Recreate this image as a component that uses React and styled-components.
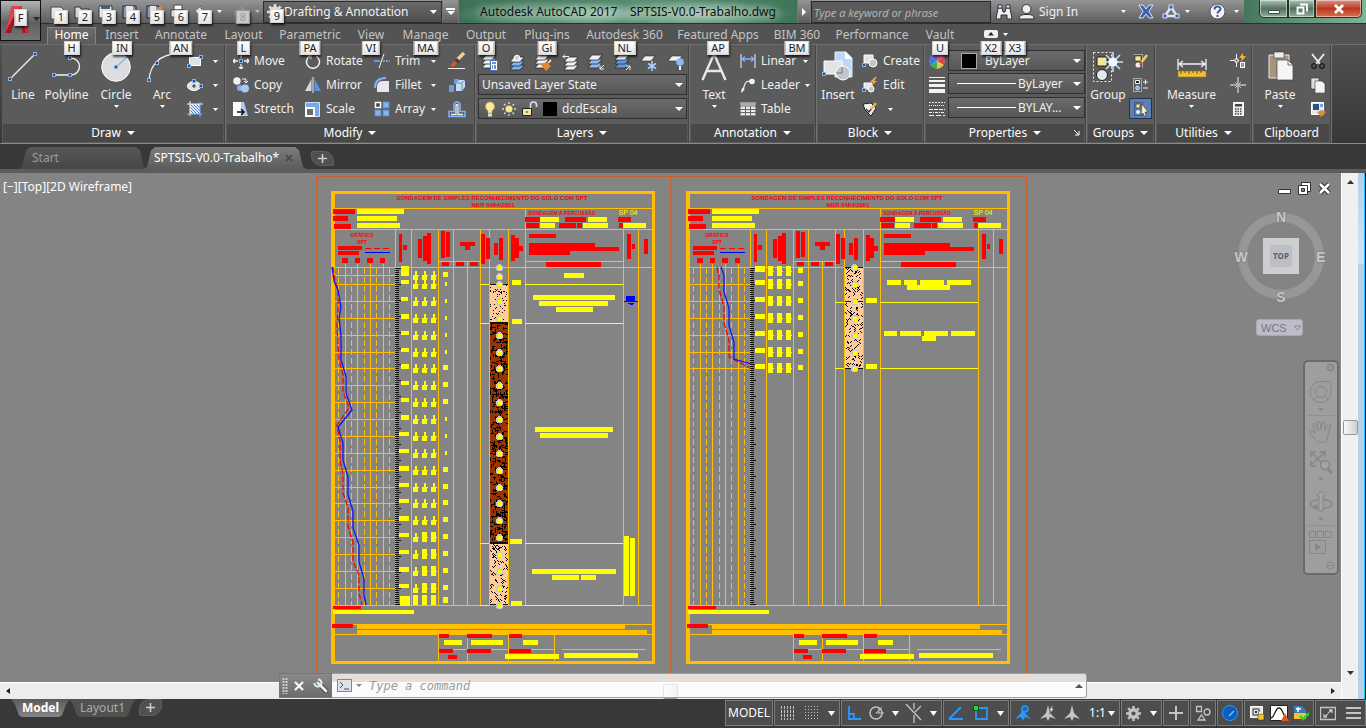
import React from "react";
import styled, { createGlobalStyle, css } from "styled-components";

const GlobalStyle = createGlobalStyle`
  * { box-sizing: border-box; }
  body {
    margin: 0;
    background: #383838;
    font-family: "Noto Sans", "Open Sans", sans-serif;
    font-size: 12px;
    line-height: 16px;
    color: #f0f0f0;
    overflow: hidden;
  }
  button, input, select { font: inherit; color: inherit; }
  button { background: none; border: 0; padding: 0; margin: 0; }
  svg { display: block; flex: none; }
  h1 { margin: 0; font: inherit; }
`;

/* ---------- small shared bits ---------- */

const Svg = ({ w = 16, h = 16, children, ...rest }) => (
  <svg width={w} height={h} viewBox={`0 0 ${w} ${h}`} fill="none" aria-hidden="true" {...rest}>
    {children}
  </svg>
);

const Caret = ({ w = 5, h = 3, color = "#fff" }) => (
  <Svg w={w} h={h}>
    <path d={`M0 0h${w}L${w / 2} ${h}z`} fill={color} />
  </Svg>
);

const KeyTip = styled.kbd`
  position: absolute;
  left: 50%;
  top: ${(p) => p.$top || 17}px;
  transform: translateX(-50%);
  z-index: 5;
  height: ${(p) => p.$h || 14}px;
  min-width: 13px;
  padding: 0 3px;
  text-align: center;
  font-family: inherit;
  font-size: 11px;
  line-height: ${(p) => (p.$h || 14) - 2}px;
  color: ${(p) => (p.$dim ? "#999" : "#222")};
  background: ${(p) => (p.$dim ? "#c8c8c8" : "linear-gradient(#fff, #e4e4e4)")};
  border: 1px solid ${(p) => (p.$dim ? "#999" : "#d8d8d8")};
  box-shadow: 1px 2px 2px rgba(0, 0, 0, 0.7);
`;

/* ---------- icons ---------- */

const B = "#7db3ff";
const W = "#f2f2f2";
const Node = ({ x, y }) => <rect x={x - 1.5} y={y - 1.5} width="3" height="3" fill="#3b4656" stroke={B} />;
const Sheets = ({ y = 0, low = W }) => (
  <g stroke="#2c2c2c" strokeWidth=".8">
    <path d={`M5 ${y + 9}h10l-4 5H1z`} fill={low} />
    <path d={`M5 ${y + 5}h10l-4 5H1z`} fill={low} />
    <path d={`M5 ${y + 1}h10l-4 5H1z`} fill={W} />
  </g>
);

const icons = {
  line: <Svg w={32} h={32}><path d="M3 28 28 3" stroke={W} strokeWidth="1.2" /><Node x={3} y={28} /><Node x={28} y={3} /></Svg>,
  polyline: <Svg w={32} h={32}><path d="M3 24h17a8 8 0 0 0 0-17" stroke={W} strokeWidth="1.4" /><Node x={3} y={24} /><Node x={19} y={24} /><Node x={19} y={7} /></Svg>,
  circle: (
    <Svg w={32} h={32}>
      <circle cx="16" cy="16" r="14.3" fill="#dcdde1" stroke="#fff" />
      <path d="M16 16 27 6" stroke={B} strokeWidth="1.2" /><Node x={16} y={16} />
    </Svg>
  ),
  arc: <Svg w={32} h={32}><path d="M3 29C4 14 14 3 31 3" stroke={W} strokeWidth="1.3" /><Node x={3} y={29} /><Node x={11} y={12} /></Svg>,
  rect: <Svg><rect x="2.5" y="4.5" width="11" height="8" fill="#dfe1e6" stroke="#fff" /><Node x={2} y={13} /><Node x={14} y={4} /></Svg>,
  ellipse: <Svg><ellipse cx="7" cy="9" rx="6.5" ry="4.5" fill="#dfe1e6" stroke="#fff" /><path d="M7 7v4M5 9h4" stroke="#333" /><Node x={7} y={4} /><Node x={14} y={9} /></Svg>,
  hatch: (
    <Svg>
      <rect x="3" y="3" width="10" height="10" fill="#dfe8f7" />
      <path d="m3 9 4 4M3 6l7 7M3 3l10 10M6 3l7 7M9 3l4 4" stroke="#4b81d8" />
      <path d="M3 0v15M0 3h16" stroke={W} /><path d="M13 1v15M0 13h15" stroke={B} />
    </Svg>
  ),
  move: <Svg><path d="M8 0v5M8 11v5M0 8h5M11 8h5M6 2l2-2 2 2M6 14l2 2 2-2M2 6 0 8l2 2M14 6l2 2-2 2" stroke={W} strokeWidth="1.3" /><Node x={8} y={8} /></Svg>,
  copy: <Svg><circle cx="4" cy="4" r="3.7" fill={W} /><circle cx="7" cy="11" r="3" fill="#88aee8" /><circle cx="12" cy="11.5" r="4" fill="#a9c8f5" /><path d="M9 2h4v4M11 4l2 2 2-2" stroke={W} /></Svg>,
  stretch: <Svg><path d="M0 1h8v14H0z" fill="#fff" /><path d="M8 1h3l4 14H8z" fill="#a9cbf4" /><path d="M4 11h7M8 8l3 3-3 3" stroke="#111" strokeWidth="1.5" /></Svg>,
  rotate: <Svg><path d="M5 3a6.5 6.5 0 1 0 6 0" stroke={W} strokeWidth="1.5" /><path d="M2 2h4v4" stroke={W} /></Svg>,
  mirror: <Svg><path d="M6.5 2v12H0z" fill="#d5d7dc" /><path d="M9.5 2v12H16z" fill="#5c93e0" /><path d="M8 0v16" stroke={W} /></Svg>,
  scale: <Svg><path d="M.5 1.5h14v14H.5z" fill="#78a8ec" stroke="#cfe1fa" /><path d="M1 7h8v8H1z" fill="#6a6a6a" stroke="#fff" strokeWidth="2" /></Svg>,
  trim: <Svg><path d="M10 1 5 15" stroke={W} /><path d="M0 8h6" stroke={B} strokeWidth="1.4" /><path d="M9 8h7" stroke={B} strokeDasharray="2 1" strokeWidth="1.4" /></Svg>,
  fillet: <Svg><path d="M3 15V9a6 6 0 0 1 6-5h6v11z" fill="#e8e8ec" /><path d="M1 11C1 4 5 1 12 1" stroke={B} strokeWidth="2" /></Svg>,
  array: <Svg><path d="M1.5 1.5h5v5h-5z" fill="#444" stroke="#fff" strokeWidth="1.5" /><path d="M9.5 1.5h5v5h-5zM1.5 9.5h5v5h-5zM9.5 9.5h5v5h-5z" fill="#8db7f2" stroke="#6a9ee8" strokeWidth="1.5" /></Svg>,
  erase: <Svg w={18} h={18}><path d="m8 9 8-8" stroke="#f0cf9c" strokeWidth="3.4" /><path d="m2 14 5-6 3 3-5 4z" fill="#e2541f" /><path d="m6 8 3-2 3 3-2 3z" fill="#444" /><path d="M0 16.5h17" stroke={W} /></Svg>,
  explode: <Svg w={18} h={18}><path d="M1 9h5v7H1zM6 3h5l-1 5H6z" fill="#6c9fe2" /><path d="m8 7 3-3h6v7l-3 4H8z" fill="#c7dcf7" /><path d="M8 7h6v8M14 7l3-3" stroke="#6f8fb8" /></Svg>,
  offset: <Svg w={18} h={18}><path d="M1 16.5v-5h5V5a3 3 0 0 1 6 0v6.5h5v5z" stroke={B} strokeWidth="1.5" /><path d="M3 14.5h5V5.500a1 1 0 0 1 2 0v9h5" stroke={W} strokeWidth="1.3" /></Svg>,
  layerProps: <Svg w={18} h={18}><Sheets /><path d="M9.5 6.500h7v10h-7z" fill="#fff" stroke="#3b6db3" /><path d="M11 9h4M11 12h1M13 12h2M11 14h1M13 14h2" stroke="#3b6db3" strokeWidth="1.5" /></Svg>,
  layerCurrent: <Svg w={18} h={18}><g transform="translate(1 0)"><Sheets y={2} low="#7fb0f2" /></g><circle cx="9" cy="4" r="2.8" fill="#c9d4e6" stroke="#fff" /></Svg>,
  layerMatch: <Svg w={18} h={18}><Sheets /><path d="m7 11 5-3 5 4-5 5z" fill="#e08a2e" /><path d="m14 9 3-3" stroke="#f0cf9c" strokeWidth="2" /></Svg>,
  layerPrev: <Svg w={18} h={18}><g transform="translate(2 2)"><Sheets /></g><path d="M8 2.500H2M4 .500 2 2.500l2 2" stroke={W} /></Svg>,
  layerIso: <Svg w={18} h={18}><Sheets low="#8db9f5" /><path d="m17 11-4 4M13 11.500v3.500h4" stroke={W} /></Svg>,
  layerUniso: <Svg w={18} h={18}><Sheets low="#5f9af0" /><path d="m12 16 4-4M12 12h4v4" stroke={W} /></Svg>,
  layerFreeze: <Svg w={18} h={18}><path d="M5 2h10l-4 5H1z" fill={W} stroke="#2c2c2c" strokeWidth=".6" /><path d="M12 7v10M8 9.500l8 5M16 9.500l-8 5" stroke="#a8d0ff" strokeWidth="1.6" /></Svg>,
  layerOff: <Svg w={18} h={18}><path d="M5 2h10l-4 5H1z" fill={W} stroke="#2c2c2c" strokeWidth=".6" /><circle cx="13" cy="8" r="3.8" fill="#8db9f5" /><path d="M13 12v4" stroke={W} strokeWidth="2" /></Svg>,
  bulb: <Svg w={12}><path d="M6 1a4.500 4.500 0 0 0-2 8.500V12h4V9.500A4.500 4.500 0 0 0 6 1z" fill="#ffe9a0" stroke="#c9b060" strokeWidth=".7" /><path d="M4 12.500h4v3H4z" fill="#ddd" /></Svg>,
  sun: <Svg><circle cx="8" cy="8" r="3.5" fill="#ffe48a" /><path d="M8 1v2M8 13v2M1 8h2M13 8h2M3 3l1.500 1.500M11.500 11.500 13 13M13 3l-1.500 1.500M4.500 11.500 3 13" stroke="#ddd" strokeWidth="1.3" /></Svg>,
  lock: <Svg><path d="M8.500 8V4a3 3 0 0 1 6 0v2" stroke="#dfe3ea" strokeWidth="1.5" /><path d="M.5 7.500h9v7h-9z" fill="#f7e3a0" stroke="#222" /><path d="M5 10v2" stroke="#333" /></Svg>,
  text: <Svg w={28} h={32}><path d="M2.500 29 13.500 4h1L25.500 29M7 20h14" stroke="#e8e8e8" strokeWidth="2.4" /></Svg>,
  linear: <Svg><path d="M1 1v14M15 1v14" stroke={W} /><path d="M2 6h12M5 3.500 2 6l3 2.500M11 3.500 14 6l-3 2.500" stroke={B} strokeWidth="1.3" /></Svg>,
  leader: <Svg><path d="M2 15 5 7c1-3 3-3 5-3" stroke={W} strokeWidth="1.2" /><circle cx="12" cy="4.500" r="2.800" fill={W} /><path d="m1 16 1-5 3 1z" fill={W} /></Svg>,
  table: <Svg><path d="M.5 1.500h15v13H.5z" fill="#e8e8e8" stroke="#999" /><path d="M0 5h16M0 8.500h16M0 11.500h16M5.500 5v10M10.500 5v10" stroke="#666" /><path d="M1 2h14v2.500H1z" fill="#aaa" /></Svg>,
  insert: (
    <Svg w={32} h={32}>
      <path d="M13 1h11l6 6v19H13z" fill="#bdd7f8" stroke="#e6f0fd" /><path d="M23 1v7h7" fill="#fff" />
      <path d="M2 10h18v13H2z" fill="#e3e4e8" stroke="#fff" />
      <circle cx="21" cy="22" r="7" fill="#c3c5cb" stroke="#fff" /><path d="M14 22h6v-6" stroke="#777" /><Node x={2} y={23} />
    </Svg>
  ),
  create: <Svg><path d="M2 2h9v8H2z" fill="#e3e4e8" stroke="#fff" /><circle cx="11" cy="10" r="4" fill="#c3c5cb" stroke="#fff" /><Node x={2} y={12} /></Svg>,
  edit: <Svg><path d="M2 6h8v6H2z" fill="#e3e4e8" stroke="#fff" /><circle cx="9" cy="12" r="3" fill="#c3c5cb" stroke="#fff" /><path d="m13 0-5 5h3L9 9l6-5h-3l3-4z" fill="#ffa832" /><Node x={2} y={13} /></Svg>,
  attrs: <Svg><path d="m1 3 8-1 5 5-5 8-6-6z" fill="#f0f0f4" stroke="#222" /><path d="m4 8 3 3 6-8" stroke="#333" strokeWidth="1.3" /><path d="m9 8 5-6" stroke="#f0ac48" strokeWidth="2.5" /></Svg>,
  wheel: (
    <Svg>
      <circle cx="8" cy="8" r="7.5" fill="#eee" />
      <path d="M8 8V.5A7.500 7.500 0 0 1 14.500 4z" fill="#d65c9a" /><path d="m8 8 6.500-4a7.500 7.500 0 0 1 0 8z" fill="#e04646" />
      <path d="m8 8 6.500 4A7.500 7.500 0 0 1 8 15.500z" fill="#e8c340" /><path d="M8 8v7.500A7.500 7.500 0 0 1 1.500 12z" fill="#3fae59" />
      <path d="m8 8-6.500 4a7.500 7.500 0 0 1 0-8z" fill="#3a7be0" /><path d="M8 8 1.500 4A7.500 7.500 0 0 1 8 .5z" fill="#7a5ad0" />
    </Svg>
  ),
  weights: <Svg><path d="M0 .5h16" stroke={W} /><path d="M0 4h16" stroke={W} strokeWidth="2" /><path d="M0 8.500h16" stroke={W} strokeWidth="3" /><path d="M0 14h16" stroke={W} strokeWidth="4" /></Svg>,
  ltypes: <Svg><path d="M0 1.500h16" stroke={W} strokeDasharray="2 1" /><path d="M0 4.500h16" stroke={W} strokeDasharray="1 1" /><path d="M0 8.500h16" stroke={W} strokeDasharray="4 1" /><path d="M0 11.500h16" stroke={W} strokeDasharray="3 1 1 1" /><path d="M0 14.500h16" stroke={W} strokeDasharray="5 2" /></Svg>,
  group: (
    <Svg w={32} h={32}>
      <path d="M1.500 1.500h18v29h-18z" stroke={W} strokeDasharray="2 2" />
      <path d="M5 6h10v9H5z" fill="#f6e98f" stroke="#222" /><circle cx="10" cy="24" r="5.500" fill="#e2eaee" stroke="#222" />
      <path d="M21 1v20M11 11h20M14 4l14 14M28 4 14 18" stroke="#bfe2ff" strokeWidth="1.6" /><circle cx="21" cy="11" r="4.500" fill="#f2faff" />
    </Svg>
  ),
  ungroup: <Svg><path d="M2.500 1.500h8v13" stroke={W} strokeDasharray="1 1" /><path d="M3 3h6v5H3z" fill="#f6e98f" stroke="#222" strokeWidth=".6" /><circle cx="6" cy="12" r="2.5" fill={W} /><path d="m9 10 6-8" stroke="#e6d36a" strokeWidth="2.5" /><path d="m8 12 2-3" stroke="#e23b2c" strokeWidth="2" /></Svg>,
  groupEdit: <Svg><path d="M1.500 1.500h8v13h-8z" stroke={W} strokeDasharray="1 1" /><path d="M3.500 3.500h4v3h-4z" fill="#222" stroke={W} /><circle cx="5.500" cy="11" r="2" fill="#7fb0f2" stroke="#fff" strokeWidth=".6" /><path d="M11 5h5M13.500 2.500v5M11 11h5" stroke={W} /></Svg>,
  groupSel: <Svg><path d="M1.500 1.500h8v13h-8z" stroke="#22395f" strokeDasharray="1 1" /><path d="M3 3h4v4H3z" fill="#f6e98f" stroke="#222" strokeWidth=".6" /><circle cx="5" cy="11" r="2" fill={W} /><path d="m9 3 6 8h-3l1 4h-2l-1-3-2 2z" fill="#fbf0b0" stroke="#222" strokeWidth=".5" /></Svg>,
  measure: (
    <Svg w={32} h={32}>
      <path d="M2 8v11M30 8v11M3 13h26M7 10l-4 3 4 3M25 10l4 3-4 3" stroke={W} strokeWidth="1.3" />
      <path d="M2 20h28v6H2z" fill="#f0bf38" stroke="#9a7417" strokeWidth=".6" /><path d="M5 20v3M9 20v2M13 20v3M17 20v2M21 20v3M25 20v2" stroke="#6b4f10" />
    </Svg>
  ),
  quickCalc: <Svg><path d="M6.500 1v13M0 7.500h9" stroke={W} /><path d="M5 6h3v3H5z" fill="#5a5a5a" stroke={W} /><path d="m13 0-4 5h3l-1 4 5-6h-3z" fill="#ffb02e" /><path d="M10 9h5v6h-5z" fill="#fff" /><path d="M11 11h3M11 13h3" stroke="#333" /></Svg>,
  point: <Svg><path d="M8 0v16M0 8h16" stroke={W} /><path d="m5 5 6 6M11 5l-6 6" stroke="#bbb" /></Svg>,
  calc: <Svg><path d="M3.500 1.500h10v13h-10z" fill="#eee" stroke="#fff" /><path d="M5 3h7v2.500H5z" fill="#444" /><path d="M5 8h7M5 10.500h7M5 13h7" stroke="#444" strokeDasharray="1.5 1" strokeWidth="1.3" /></Svg>,
  paste: (
    <Svg w={32} h={32}>
      <path d="M5 4h20v23H5z" fill="#a8937c" stroke="#e8e8e8" /><path d="M10 1h10v6H10z" fill="#eee" stroke="#333" strokeWidth=".6" />
      <path d="M13 9h11l5 5v15H13z" fill="#f5f5f5" stroke="#444" strokeWidth=".7" /><path d="M24 9v5h5" stroke="#444" strokeWidth=".7" />
    </Svg>
  ),
  cut: <Svg><path d="m2 1 8 10M14 1 6 11" stroke={W} strokeWidth="1.8" /><circle cx="4" cy="13" r="2.2" stroke="#222" strokeWidth="1.5" /><circle cx="12" cy="13" r="2.2" stroke="#222" strokeWidth="1.5" /></Svg>,
  copyClip: <Svg><path d="M1 1h8v11H1z" fill="#ddd" stroke="#333" strokeWidth=".6" /><path d="M5 4h7l3 3v9H5z" fill="#f5f5f5" stroke="#333" strokeWidth=".6" /></Svg>,
  matchProp: <Svg><path d="M1.500 1.500h12v12h-12z" fill="#e8e8e8" stroke="#fff" /><path d="M3 3h6v6H3z" fill="#28528c" /><path d="M10 3h3v3h-3z" fill="#6fa5e8" /><path d="m7 11 5-2 4 2-5 5z" fill="#d98b3a" /></Svg>,
};

/* ---------- title bar ---------- */

const Header = styled.header`
  display: flex;
  height: 44px;
  background: #535353;
  position: relative;
  z-index: 3;
`;

const AppButton = styled.button`
  position: relative;
  flex: none;
  width: 41px;
  height: 41px;
  border: 1px solid #111;
  background: linear-gradient(#b4b4b4, #606060 55%, #767676);
  display: flex;
  align-items: center;
  gap: 3px;
  padding: 0 0 4px 3px;
`;

const HeaderRows = styled.div`
  flex: 1;
  min-width: 0;
`;

const TitleBar = styled.div`
  display: flex;
  height: 24px;
  border-bottom: 1px solid #2f2f2f;
  background: linear-gradient(#959595, #5c5c5c);
`;

const QuickAccess = styled.div`
  display: flex;
  align-items: center;
  padding-left: 5px;
  width: 222px;
  flex: none;
`;

const QuickButton = styled.button`
  position: relative;
  display: flex;
  align-items: center;
  height: 22px;
  width: ${(p) => p.$w || 24}px;
  padding-left: 4px;
  gap: 7px;
  > svg:first-child { opacity: ${(p) => (p.$dim ? 0.5 : 1)}; }
  > svg + svg { opacity: ${(p) => (p.$dim ? 0.5 : 1)}; }
  kbd { left: 15px; }
`;

const Workspace = styled.label`
  position: relative;
  display: flex;
  align-items: center;
  gap: 1px;
  flex: none;
  width: 179px;
  height: 22px;
  margin-top: 1px;
  padding: 0 4px 0 3px;
  background: linear-gradient(#6a6a6a, #4e4e4e);
  border: 1px solid #2b2b2b;
  kbd { left: 13px; }
`;

const PlainSelect = styled.select`
  appearance: none;
  flex: 1;
  min-width: 0;
  border: 0;
  padding: 0;
  outline: 0;
  background: transparent;
  height: 18px;
`;

const Glass = styled.div`
  flex: 1;
  min-width: 0;
  overflow: hidden;
  background:
    radial-gradient(ellipse 60px 12px at 42% 60%, rgba(205, 228, 216, 0.6), transparent),
    radial-gradient(ellipse 90px 14px at 72% 60%, rgba(205, 228, 216, 0.7), transparent),
    radial-gradient(ellipse 90px 14px at 25% 60%, rgba(190, 218, 204, 0.5), transparent),
    linear-gradient(90deg, #3d7155, #5b9074 60%, #3e7457);
  display: flex;
  justify-content: center;
  h1 {
    color: #0c120f;
    white-space: pre;
    line-height: 24px;
    padding: 0 12px;
    text-shadow: 0 0 8px #d8f0e4;
  }
`;

const NarrowButton = styled.button`
  flex: none;
  width: ${(p) => p.$w}px;
  display: flex;
  flex-direction: column;
  align-items: center;
  justify-content: center;
  gap: 1px;
  border: 1px solid #777;
  border-width: 0 1px;
`;

const Search = styled.input`
  flex: none;
  width: 180px;
  height: 22px;
  margin-top: 1px;
  padding: 0 2px;
  border: 1px solid #2b2b2b;
  background: #5a5a5a;
  font-style: italic;
  font-size: 11px;
  outline: 0;
  &::placeholder { color: #b4b4b4; opacity: 1; }
`;

const Account = styled.div`
  display: flex;
  align-items: center;
  flex: none;
  width: 253px;
  padding: 0 5px 0 4px;
`;

const AccountButton = styled.button`
  display: flex;
  align-items: center;
  gap: ${(p) => p.$gap || 4}px;
  margin-left: ${(p) => (p.$push ? "auto" : `${p.$left || 0}px`)};
`;

const WindowSide = styled.div`
  display: flex;
  justify-content: flex-end;
  align-items: flex-start;
  flex: none;
  width: 122px;
  padding-right: 4px;
  background: linear-gradient(90deg, #46775d, #7fb39a);
`;

const WinButton = styled.button`
  width: ${(p) => (p.$close ? 47 : p.$mid ? 27 : 29)}px;
  height: 18px;
  display: flex;
  align-items: center;
  justify-content: center;
  border: 1px solid #203528;
  border-top: 0;
  box-shadow: inset 0 0 0 1px rgba(255, 255, 255, 0.45);
  background: ${(p) =>
    p.$close ? "linear-gradient(#d9968a, #b8391f 50%, #d9704e)" : "linear-gradient(#a8c4b5, #55735f 50%, #8fae9d)"};
  border-radius: ${(p) => (p.$close ? "0 0 5px 0" : p.$mid ? "0" : "0 0 0 5px")};
`;

const Tabs = styled.nav`
  display: flex;
  height: 20px;
  padding-left: 6px;
  background: #535353;
`;

const Tab = styled.a`
  position: relative;
  flex: none;
  width: ${(p) => p.$w}px;
  text-align: center;
  line-height: 21px;
  white-space: nowrap;
  text-decoration: none;
  color: ${(p) => (p.$on ? "#fff" : "#c4c4c4")};
  ${(p) =>
    p.$on &&
    css`
      margin-top: 3px;
      line-height: 14px;
      border: 1px solid #858585;
      border-bottom: 0;
      background: linear-gradient(#6b6b6b, #5c5c5c);
      kbd { top: 13px; }
    `}
`;

const TabTool = styled.button`
  position: relative;
  width: 24px;
  margin-left: ${(p) => p.$left || 0}px;
  display: flex;
  align-items: center;
  justify-content: ${(p) => (p.$start ? "flex-start" : "center")};
`;

const quickIcons = [
  <path key="n" d="M1 3h10l4 4v8H1z" fill="#e8e8e8" stroke="#444" />,
  <path key="o" d="M1 3h5l1 2h8v9H1z" fill="#d8dce4" stroke="#333" />,
  <g key="s"><path d="M1 2h13v12H1z" fill="#e8ecf2" stroke="#2a3850" /><path d="M3 2h9v3H3z" fill="#4a5c78" /></g>,
  <g key="a"><path d="M1 2h13v12H1z" fill="#8a98b0" stroke="#1c2434" /><path d="M4 2h7v5H4z" fill="#dfe6f0" /></g>,
  <g key="e"><path d="M1 2h12v12H1z" fill="#8a98b0" stroke="#1c2434" /><path d="M4 2h6v5H4z" fill="#dfe6f0" /><path d="m10 9 5-6" stroke="#e38b30" strokeWidth="3" /></g>,
  <g key="p"><path d="M4 1h8v5H4z" fill="#fff" stroke="#444" /><path d="M1 6h14v7H1z" fill="#e4e4e4" stroke="#444" /></g>,
  <path key="u" d="M7 2 1 7l6 5V9c4 0 6 1 7 4 0-5-2-8-7-8z" fill="#ececec" stroke="#444" strokeWidth=".6" />,
  <path key="r" d="m9 2 6 5-6 5V9c-4 0-6 1-7 4 0-5 2-8 7-8z" fill="#aaa" />,
];

const Gear = ({ size = 16, color = "#dcdcdc" }) => (
  <svg width={size} height={size} viewBox="0 0 16 16" fill="none" aria-hidden="true">
    <circle cx="8" cy="8" r="4" stroke={color} strokeWidth="3.5" />
    <path d="M8 0v3M8 13v3M0 8h3M13 8h3M2.3 2.3l2 2M11.7 11.7l2 2M13.700 2.3l-2 2M4.3 11.700l-2 2" stroke={color} strokeWidth="2.6" />
  </svg>
);

const tabList = [
  ["Home", "H", 49], ["Insert", "IN", 52], ["Annotate", "AN", 66], ["Layout", "L", 59],
  ["Parametric", "PA", 74], ["View", "VI", 48], ["Manage", "MA", 61], ["Output", "O", 60],
  ["Plug-ins", "Gi", 62], ["Autodesk 360", "NL", 93], ["Featured Apps", "AP", 94],
  ["BIM 360", "BM", 64], ["Performance", "", 86], ["Vault", "U", 50],
];

function TopBar() {
  return (
    <Header>
      <AppButton aria-label="Application menu">
        <Svg w={26} h={32}>
          <path d="M1 30 8 3h9l8 27h-6l-2-7H9l-2 7z" fill="#9d1a24" />
          <path d="M8 3h9l-7 10-9 17z" fill="#dc4650" />
          <path d="m12 9-3 10h7z" fill="#5d0a12" />
          <path d="m17 3 8 27h-3L14 6z" fill="#c9323c" />
        </Svg>
        <Caret w={7} h={4} color="#222c38" />
        <KeyTip $top={8} $h={17}>F</KeyTip>
      </AppButton>
      <HeaderRows>
        <TitleBar>
          <QuickAccess>
            {quickIcons.map((icon, i) => (
              <QuickButton key={i} $w={i === 6 ? 38 : i === 7 ? 34 : 24} $dim={i === 7} aria-label={`Quick access ${i + 1}`}>
                <Svg>{icon}</Svg>
                {i > 5 && <Caret />}
                <KeyTip $top={9} $dim={i === 7}>{i + 1}</KeyTip>
              </QuickButton>
            ))}
          </QuickAccess>
          <Workspace>
            <Gear />
            <PlainSelect aria-label="Workspace"><option>Drafting &amp; Annotation</option></PlainSelect>
            <Caret w={7} h={4} />
            <KeyTip $top={7}>9</KeyTip>
          </Workspace>
          <NarrowButton $w={17} aria-label="Customize toolbar">
            <Svg w={9} h={2}><path d="M0 1h9" stroke="#fff" strokeWidth="2" /></Svg>
            <Caret w={8} h={4} />
          </NarrowButton>
          <Glass><h1>{"Autodesk AutoCAD 2017    SPTSIS-V0.0-Trabalho.dwg"}</h1></Glass>
          <NarrowButton $w={14} aria-label="Show search">
            <Svg w={4} h={8}><path d="M0 0v8l4-4z" fill="#fff" /></Svg>
          </NarrowButton>
          <Search placeholder="Type a keyword or phrase" aria-label="Search help" />
          <Account>
            <AccountButton aria-label="Search">
              <Svg w={18} h={18}>
                <path d="M3 5h4l1 4h2l1-4h4l2 11h-5v-4H6v4H1z" fill="#f0f0f0" stroke="#2a3140" />
                <path d="M3 2h4v3H3zM11 2h4v3h-4z" fill="#f0f0f0" stroke="#2a3140" />
              </Svg>
            </AccountButton>
            <AccountButton $left={5}>
              <Svg w={17} h={17}>
                <circle cx="8.5" cy="6" r="4.5" fill="#eee" stroke="#333" /><path d="M1 16c0-4 4-4 5-4.500h5c2 .5 5 .5 5 4.500z" fill="#eee" stroke="#333" />
              </Svg>
              Sign In
            </AccountButton>
            <AccountButton $push aria-label="Account menu"><Caret /></AccountButton>
            <AccountButton $left={12} aria-label="Exchange apps">
              <Svg w={16} h={15}><path d="M1 1h4l3 4 3-4h4l-4 6.500 4 6.500h-4l-3-4-3 4H1l4-6.500z" fill="#3f62b4" stroke="#dce6fa" /></Svg>
            </AccountButton>
            <AccountButton $left={8} $gap={5} aria-label="Stay connected">
              <Svg w={18} h={16}><path d="M9 3 15 12H3z" stroke="#dce6fa" strokeWidth="2.4" /><path d="M7 1h4v4H7zM1 10h4v4H1zM13 10h4v4h-4z" fill="#3f62b4" stroke="#dce6fa" /></Svg>
              <Caret />
            </AccountButton>
            <AccountButton $left={19} $gap={8} aria-label="Help">
              <Svg w={17} h={17}>
                <circle cx="8.5" cy="8.5" r="7.5" fill="#f4f4f4" stroke="#555" />
                <path d="M5.500 6.500c0-4 6-4 6-.5 0 2-3 2-3 4.500M8.500 12v2" stroke="#2d5cb0" strokeWidth="2" />
              </Svg>
              <Caret />
            </AccountButton>
          </Account>
          <WindowSide>
            <WinButton aria-label="Minimize"><Svg w={12} h={14}><path d="M.5 8.500h11v3H.5z" fill="#fff" stroke="#444" /></Svg></WinButton>
            <WinButton $mid aria-label="Restore"><Svg w={12} h={14}><path d="M4 2.500h7v7M1.500 5.500h6v6h-6z" stroke="#fff" strokeWidth="1.8" /></Svg></WinButton>
            <WinButton $close aria-label="Close"><Svg w={12} h={12}><path d="m2 2 8 8M10 2l-8 8" stroke="#fff" strokeWidth="2.8" /></Svg></WinButton>
          </WindowSide>
        </TitleBar>
        <Tabs>
          {tabList.map(([name, key, w], i) => (
            <Tab key={name} href={`#${name}`} $w={w} $on={i === 0}>
              {name}
              {key && <KeyTip>{key}</KeyTip>}
            </Tab>
          ))}
          <TabTool $left={14} aria-label="Minimize ribbon">
            <Svg w={14} h={8}><rect width="14" height="8" rx="2" fill="#f0f0f0" /><path d="M4 5.500 7 2l3 3.500z" fill="#222" /></Svg>
            <KeyTip>X2</KeyTip>
          </TabTool>
          <TabTool $start aria-label="Ribbon options">
            <Caret />
            <KeyTip>X3</KeyTip>
          </TabTool>
        </Tabs>
      </HeaderRows>
    </Header>
  );
}

/* ---------- ribbon ---------- */

const Ribbon = styled.div`
  display: flex;
  height: 100px;
  padding-left: 2px;
  background: linear-gradient(#505050, #383838);
  border-top: 1px solid #6e6e6e;
  border-bottom: 1px solid #8a8a8a;
`;

const PanelBox = styled.section`
  flex: none;
  width: ${(p) => p.$w}px;
  display: flex;
  flex-direction: column;
  background: #5b5b5b;
  border-right: 1px solid #727272;
  box-shadow: inset -1px 0 0 #444;
`;

const PanelBody = styled.div`
  flex: 1;
  display: flex;
  padding: 4px 0 0 ${(p) => p.$pad || 0}px;
`;

const PanelTitle = styled.button`
  position: relative;
  height: 18px;
  margin: 0 2px 1px 1px;
  background: #484848;
  display: flex;
  align-items: center;
  justify-content: center;
  gap: 6px;
  color: #fff;
  > svg:nth-of-type(2) { position: absolute; right: 4px; }
`;

const Col = styled.div`
  display: flex;
  flex-direction: column;
  flex: none;
  width: ${(p) => (p.$w ? `${p.$w}px` : "auto")};
  padding: ${(p) => p.$top || 0}px 0 0 ${(p) => p.$left || 0}px;
`;

const BigButton = styled.button`
  flex: none;
  width: ${(p) => p.$w}px;
  height: 66px;
  display: flex;
  flex-direction: column;
  align-items: center;
  padding-top: 2px;
  > span { margin: 4px 0 2px; }
`;

const SmallButton = styled.button`
  display: flex;
  align-items: center;
  height: 24px;
  gap: 5px;
  padding: 0 3px;
  > svg + svg { margin-left: 5px; }
  > span + svg { margin-left: auto; }
  ${(p) =>
    p.$on &&
    css`
      width: 23px;
      height: 21px;
      margin: 1px 0;
      background: #5d7fb5;
      border: 1px solid #26324a;
    `}
`;

const ComboBox = styled.label`
  display: flex;
  align-items: center;
  height: 21px;
  gap: ${(p) => p.$gap || 5}px;
  padding: 0 3px 0 ${(p) => p.$pad || 3}px;
  margin-bottom: ${(p) => p.$mb || 3}px;
  background: linear-gradient(#6c6c6c, #565656);
  border: 1px solid #2f2f2f;
`;

const Swatch = styled.i`
  flex: none;
  width: ${(p) => p.$s || 14}px;
  height: ${(p) => p.$s || 14}px;
  background: #000;
  border: 1px solid ${(p) => (p.$framed ? "#aaa" : "#000")};
`;

const Rule = styled.i`
  flex: none;
  width: 59px;
  height: 1px;
  background: #fff;
`;

const Panel = ({ title, w, pad, plain, launcher, children }) => (
  <PanelBox $w={w}>
    <PanelBody $pad={pad}>{children}</PanelBody>
    <PanelTitle>
      {title}
      {!plain && <Caret w={8} h={4} />}
      {launcher && <Svg w={6} h={6}><path d="m0 0 5 5M5 1v4H1" stroke="#fff" /></Svg>}
    </PanelTitle>
  </PanelBox>
);

const Big = ({ icon, label, w, caret }) => (
  <BigButton $w={w}>
    {icons[icon]}
    <span>{label}</span>
    {caret && <Caret />}
  </BigButton>
);

const Small = ({ icon, label, caret, on }) => (
  <SmallButton $on={on} aria-label={label || icon}>
    {icons[icon]}
    {label && <span>{label}</span>}
    {caret && <Caret />}
  </SmallButton>
);

const Combo = ({ label, value, pad, gap, mb, lead }) => (
  <ComboBox $pad={pad} $gap={gap} $mb={mb}>
    {lead}
    <PlainSelect aria-label={label}><option>{value}</option></PlainSelect>
    <Caret w={8} h={4} />
  </ComboBox>
);

const IconRow = styled.div`
  display: flex;
  justify-content: space-between;
  height: 25px;
  padding: 3px 2px 0 3px;
`;

const layerTools = ["layerProps", "layerCurrent", "layerMatch", "layerPrev", "layerIso", "layerUniso", "layerFreeze", "layerOff"];

function RibbonBar() {
  return (
    <Ribbon>
      <Panel title="Draw" w={224}>
        <Big icon="line" label="Line" w={42} />
        <Big icon="polyline" label="Polyline" w={45} />
        <Big icon="circle" label="Circle" w={54} caret />
        <Big icon="arc" label="Arc" w={38} caret />
        <Col $left={3}>
          <Small icon="rect" caret />
          <Small icon="ellipse" caret />
          <Small icon="hatch" caret />
        </Col>
      </Panel>
      <Panel title="Modify" w={250} pad={4}>
        <Col $w={72}>
          <Small icon="move" label="Move" />
          <Small icon="copy" label="Copy" />
          <Small icon="stretch" label="Stretch" />
        </Col>
        <Col $w={69}>
          <Small icon="rotate" label="Rotate" />
          <Small icon="mirror" label="Mirror" />
          <Small icon="scale" label="Scale" />
        </Col>
        <Col $w={68}>
          <Small icon="trim" label="Trim" caret />
          <Small icon="fillet" label="Fillet" caret />
          <Small icon="array" label="Array" caret />
        </Col>
        <Col $left={6}>
          <Small icon="erase" />
          <Small icon="explode" />
          <Small icon="offset" />
        </Col>
      </Panel>
      <Panel title="Layers" w={214} pad={2}>
        <Col $w={209}>
          <IconRow>
            {layerTools.map((name) => <button key={name} aria-label={name}>{icons[name]}</button>)}
          </IconRow>
          <Combo label="Layer state" value="Unsaved Layer State" />
          <Combo
            label="Layer"
            value="dcdEscala"
            pad={5}
            lead={<>{icons.bulb}{icons.sun}{icons.lock}<Swatch /></>}
          />
        </Col>
      </Panel>
      <Panel title="Annotation" w={127} pad={1}>
        <Big icon="text" label="Text" w={46} caret />
        <Col $w={74}>
          <Small icon="linear" label="Linear" caret />
          <Small icon="leader" label="Leader" caret />
          <Small icon="table" label="Table" />
        </Col>
      </Panel>
      <Panel title="Block" w={108}>
        <Big icon="insert" label="Insert" w={42} />
        <Col>
          <Small icon="create" label="Create" />
          <Small icon="edit" label="Edit" />
          <Small icon="attrs" caret />
        </Col>
      </Panel>
      <Panel title="Properties" w={162} pad={1} launcher>
        <Col>
          <Small icon="wheel" />
          <Small icon="weights" />
          <Small icon="ltypes" />
        </Col>
        <Col $w={137} $top={1}>
          <Combo label="Object color" value="ByLayer" pad={12} gap={8} mb={2} lead={<Swatch $s={16} $framed />} />
          <Combo label="Lineweight" value="ByLayer" pad={8} gap={2} lead={<Rule />} />
          <Combo label="Linetype" value="BYLAY..." pad={8} gap={2} lead={<Rule />} />
        </Col>
      </Panel>
      <Panel title="Groups" w={69}>
        <Big icon="group" label="Group" w={42} />
        <Col>
          <Small icon="ungroup" />
          <Small icon="groupEdit" />
          <Small icon="groupSel" on />
        </Col>
      </Panel>
      <Panel title="Utilities" w={97}>
        <Big icon="measure" label="Measure" w={71} caret />
        <Col>
          <Small icon="quickCalc" />
          <Small icon="point" />
          <Small icon="calc" />
        </Col>
      </Panel>
      <Panel title="Clipboard" w={79} plain>
        <Big icon="paste" label="Paste" w={54} caret />
        <Col>
          <Small icon="cut" />
          <Small icon="copyClip" />
          <Small icon="matchProp" />
        </Col>
      </Panel>
    </Ribbon>
  );
}

/* ---------- file tabs ---------- */

const FileTabs = styled.nav`
  display: flex;
  align-items: flex-end;
  height: 29px;
  padding-left: 19px;
  background: #383838;
  border-bottom: 4px solid #5c5c5c;
`;

const FileTab = styled.div`
  width: ${(p) => p.$w}px;
  height: 22px;
  margin-right: -3px;
  display: flex;
  align-items: center;
  gap: 6px;
  padding-left: ${(p) => (p.$on ? 10 : 13)}px;
  color: ${(p) => (p.$on ? "#fff" : "#9c9c9c")};
  background: ${(p) => (p.$on ? "linear-gradient(#7d7d7d, #5c5c5c)" : "linear-gradient(#575757, #474747)")};
  clip-path: polygon(0 100%, 3px 90%, 7px 15%, 11px 0, calc(100% - 11px) 0, calc(100% - 7px) 15%, calc(100% - 3px) 90%, 100% 100%);
  a { color: inherit; text-decoration: none; white-space: nowrap; }
`;

const AddTab = styled.button`
  display: flex;
  align-items: center;
  justify-content: center;
  width: 23px;
  height: ${(p) => (p.$bottom ? 17 : 15)}px;
  margin: 0 0 3px ${(p) => (p.$bottom ? 4 : 8)}px;
  background: #505050;
  border: 1px solid #606060;
  border-radius: ${(p) => (p.$bottom ? "10px 2px 10px 2px" : "2px 10px 2px 10px")};
`;

const Plus = () => <Svg w={9} h={9}><path d="M4.500 0v9M0 4.500h9" stroke="#ccc" strokeWidth="1.6" /></Svg>;

/* ---------- drawing ---------- */

const AMBER = "#ffbf00";
const YELLOW = "#ffff00";
const RED = "#ff0000";

// boxes are [left, top, right, bottom]
const Boxes = ({ list, fill }) => (
  <path fill={fill} d={list.map(([a, b, c, d]) => `M${a} ${b}H${c}V${d}H${a}z`).join("")} />
);

const headRed = [
  [333, 209, 355, 214], [333, 216, 348, 221], [334, 224, 351, 229],
  [525, 217, 540, 222], [565, 217, 586, 222], [618, 217, 631, 222],
  [526, 223, 539, 228], [559, 223, 576, 228], [577, 223, 582, 228], [619, 223, 623, 228],
  [338, 246, 362, 250], [338, 251, 359, 255],
  [342, 258, 348, 263], [355, 258, 360, 263], [367, 258, 373, 263], [380, 258, 385, 263],
  [399, 234, 402, 262], [403, 245, 407, 250],
  [418, 239, 422, 258], [423, 236, 427, 261], [427, 233, 431, 264],
  [441, 231, 445, 258], [446, 232, 450, 257], [460, 242, 475, 246], [465, 246, 470, 250],
  [481, 234, 485, 264], [486, 238, 490, 259], [494, 243, 498, 255], [499, 238, 503, 260],
  [511, 235, 515, 261], [515, 238, 519, 258], [519, 246, 523, 251],
  [442, 262, 449, 266], [456, 262, 464, 266], [470, 262, 478, 266],
  [529, 234, 556, 238], [529, 243, 595, 247], [529, 247, 619, 251], [529, 251, 570, 255],
  [546, 262, 601, 267], [627, 234, 631, 259], [632, 244, 635, 249], [644, 239, 648, 254],
  [333, 606, 361, 609], [332, 624, 353, 628],
  [439, 634, 449, 638], [467, 634, 492, 638], [509, 634, 522, 638],
  [439, 649, 453, 653], [467, 649, 491, 653], [509, 649, 531, 653], [448, 655, 457, 659],
];

const headYellow = [
  [357, 209, 404, 214], [357, 216, 397, 221], [357, 223, 400, 228],
  [540, 217, 559, 222], [588, 217, 607, 222], [540, 223, 555, 228], [583, 223, 608, 228], [623, 223, 646, 228],
  [333, 610, 414, 614], [444, 640, 462, 645], [471, 640, 503, 645], [523, 640, 538, 645],
  [505, 654, 559, 659], [564, 653, 638, 658],
];

// pseudo random, fixed seed so that the hatches stay the same on every render
const scatter = (seed) => {
  let s = seed;
  return () => {
    s = (s * 16807) % 2147483647;
    return s / 2147483647;
  };
};

const density = { sand: 1.6, clay: 2.1, silt: 1.5 };

function Stratum({ kind, top, bottom }) {
  const rnd = scatter(top * 31 + 7);
  const h = bottom - top;
  let d = "";
  for (let i = 0; i < h * density[kind]; i++) {
    const x = 490 + Math.floor(rnd() * 17);
    const y = top + Math.floor(rnd() * (h - 3));
    if (kind === "sand") d += `M${x} ${y}h1v1h-1z`;
    else if (kind === "clay") d += rnd() > 0.5 ? `M${x} ${y}H${Math.min(x + 3, 508)}v1H${x}z` : `M${x} ${y}h1v3h-1z`;
    else if (rnd() > 0.5) d += `M${x} ${y + 2}h1v-1h1v1h-1v1h-1z`;
    else d += `M${x} ${y}h1v1h1v1h-1v-1h-1z`;
  }
  return (
    <g>
      <rect x="490" y={top} width="18" height={h} fill={kind === "clay" ? "#993300" : "#ffcc99"} />
      <path d={d} fill="#000" />
      <path d={`M490 ${top + 0.5}h18M490 ${bottom - 0.5}h18`} stroke="#111" />
    </g>
  );
}

const rowY = (i) => Math.round(284 + 16.88 * i);
const rows = Array.from({ length: 19 }, (_, i) => rowY(i));

const sheets = [
  {
    dx: 0,
    gridRows: 19,
    strata: [["sand", 284, 323], ["clay", 323, 543], ["silt", 543, 605]],
    cuts: [284, 323, 543, 605],
    depth: [[512, 280, 521, 285], [512, 319, 522, 324], [510, 539, 522, 544], [511, 601, 522, 606]],
    notes: [
      [564, 273, 584, 278], [533, 295, 615, 300], [539, 301, 608, 306], [556, 307, 593, 312],
      [535, 427, 613, 432], [540, 433, 608, 438], [532, 569, 616, 574], [552, 575, 579, 580], [581, 575, 596, 580],
      [624, 536, 629, 596], [630, 538, 635, 596],
    ],
    blue: "332,267 334,281 338,290 341,307 339,318 341,335 341,351 341,360 346,376 346,393 352,410 338,427 343,443 343,460 348,477 348,495 353,511 353,528 359,545 359,562 364,579 364,595 366,605",
    red: "333,267 335,281 338,290 338,309 337,325 338,345 339,360 343,375 343,391 349,408 337,425 340,442 340,460 343,475 343,493 348,508 348,526 353,543 353,561 359,575 359,593 362,605",
  },
  {
    dx: 355,
    gridRows: 6,
    strata: [["silt", 267, 302], ["silt", 301, 369]],
    cuts: [302, 368],
    depth: [[511, 298, 522, 303], [511, 364, 522, 369]],
    notes: [
      [532, 280, 546, 285], [549, 280, 562, 285], [565, 280, 589, 285], [592, 280, 616, 285], [552, 285, 595, 290],
      [529, 331, 542, 336], [545, 331, 566, 336], [569, 331, 593, 336], [596, 331, 620, 336], [567, 336, 581, 341],
    ],
    blue: "366,267 369,275 369,292 374,308 374,326 379,342 379,359 396,364",
    red: "362,267 364,275 364,289 369,307 369,323 374,340 374,357 395,368",
  },
];

function blowCounts(second) {
  const out = [];
  const last = second ? 6 : 19;
  const ys = [second ? 271 : 275, ...rows.slice(0, last)];
  ys.forEach((y, i) => {
    if (second) out.push([400, i ? y - 4 : 266, 410, i ? y + 1 : 272]);
    else if (i === 0) out.push([401, 266, 409, 276]);
    else out.push([i > 9 ? 399 : 401, y - 4, i === 2 ? 408 : 409, y + (i % 3 === 0 ? 1 : 0)]);
    [413, 422, 431].forEach((x, c) => {
      const full = second || (i > 15 && c > 0);
      if (full) out.push([x, y - 5, x + 5, y + 5]);
      else out.push([x + 2, y - 4, x + 4, y], [x, y, x + 5, y + 5]);
      out.push([x + 5, y, x + 6, y + 1]);
    });
    const thin = !second && ((i > 0 && i < 6) || (i > 8 && i < 12));
    if (thin) out.push([445, y - 2, 447, y + 2]);
    else out.push([443, y - 3, 448, y + 2]);
  });
  if (!second) out.push([400, 596, 410, 606], [413, 595, 418, 605], [422, 595, 427, 605], [431, 595, 436, 605], [443, 597, 448, 603]);
  return out;
}

function Sheet({ data }) {
  const second = data.dx > 0;
  const dots = second ? [267, ...rows.slice(0, 6)] : [267, 276, ...rows, 605];
  const ticks = [];
  for (let y = 268; y < 605; y += 2) ticks.push([395, y, (y - 268) % 16 === 0 ? 401 : 399, y + 1]);
  return (
    <g transform={`translate(${data.dx} 0)`}>
      <g stroke={AMBER} fill="none">
        <path
          d={`M334 208.500H652M334 229.500H652M334 267.500H652M438 261.500H480M525 261.500H623M334 605.500H652M334 624.500H652M334 634.500H652M438 649.500H554M562 649.500H646
          M334.500 194V661M652.500 194V661M525.500 208V605M395.500 229V605M411.500 229V605M438.500 229V605M453.500 229V605M467.500 261V605M480.500 229V605M489.500 229V605
          M508.500 229V605M623.500 229V605M638.500 229V605M438.500 634V661M467.500 634V661M508.500 634V661M554.500 634V661`}
        />
        <path d="M345.500 264V605M357.500 264V605M370.500 264V605M383.500 264V605" />
        <path d="M338.500 268V605M351.500 268V605M364.500 268V605M376.500 268V605M389.500 268V605" strokeDasharray="6 3" />
        <path d={`${second ? "" : "M334 275.500H396"}${rows.slice(0, data.gridRows).map((y) => `M334 ${y + 0.5}H396`).join("")}`} />
        <rect x="332.500" y="192.500" width="321" height="470" strokeWidth="3" />
      </g>
      <Boxes fill={AMBER} list={[[357, 625, 625, 629], [357, 630, 647, 634]]} />
      <Boxes fill="#111" list={ticks} />
      <Boxes fill={RED} list={headRed} />
      <path d="M365 248.500h6m3 0h6m3 0h6" stroke={RED} />
      <path d="M365 252.500h25" stroke="#00f" />
      {data.strata.map(([kind, top, bottom]) => <Stratum key={top} kind={kind} top={top} bottom={bottom} />)}
      <path d={data.cuts.map((y) => `M480 ${y + 0.5}h9M525 ${y + 0.5}h98`).join("")} stroke={YELLOW} />
      <Boxes fill={YELLOW} list={[...headYellow, ...blowCounts(second), ...data.depth, ...data.notes]} />
      {dots.map((y) => (
        <g key={y}>
          <circle cx="499.500" cy={y + 0.5} r="3.500" fill="#c8c8c8" />
          <rect x="498" y={y - 1} width="4" height="4" fill={YELLOW} />
        </g>
      ))}
      {!second && <path d="M626 296h9v5h3v1h-14v-1h2zM628 303h6v1h-6zM630 304h3v1h-3z" fill="#00f" />}
      <g fill="none" shapeRendering="auto">
        <polyline points={data.red} stroke={RED} strokeDasharray="6 2" strokeWidth="1.3" />
        <polyline points={data.blue} stroke="#1010ff" strokeWidth="1.3" />
      </g>
      <g fill={RED} fontFamily="Liberation Sans, sans-serif" fontSize="6" fontWeight="700" textAnchor="middle">
        <text x="492" y="200">SONDAGEM DE SIMPLES RECONHECIMENTO DO SOLO COM SPT</text>
        <text x="493" y="207">NBR 6484/2001</text>
        <text x="562" y="215" fontSize="5">SONDAGEM À PERCUSSÃO</text>
        <text x="362" y="237" fontSize="5">GRÁFICO</text>
        <text x="362" y="244" fontSize="5">SPT</text>
        <text x="628" y="215" fontSize="7" fontWeight="400" fill={YELLOW}>SP 04</text>
      </g>
    </g>
  );
}

const Plot = styled.svg`
  position: absolute;
  inset: 0;
  width: 100%;
  height: 100%;
`;

const Workspace2D = styled.main`
  flex: 1;
  min-height: 0;
  display: flex;
`;

const ViewColumn = styled.div`
  position: relative;
  flex: 1;
  min-width: 0;
  display: flex;
  flex-direction: column;
`;

const Canvas = styled.div`
  position: relative;
  flex: 1;
  background: #848484;
  overflow: hidden;
`;

const ViewLabel = styled.div`
  position: absolute;
  left: 3px;
  top: 6px;
  color: #fff;
`;

const ViewControls = styled.div`
  position: absolute;
  right: 10px;
  top: 9px;
  display: flex;
  gap: 7px;
`;

const Compass = styled.div`
  position: absolute;
  right: 13px;
  top: 33px;
`;

const Wcs = styled.button`
  position: absolute;
  right: 38px;
  top: 146px;
  width: 47px;
  height: 17px;
  display: flex;
  align-items: center;
  gap: 6px;
  padding-left: 4px;
  border-radius: 3px;
  background: #bcbdc9;
  border: 1px solid #a8a8b0;
  color: #77777c;
  font: 11px/14px "Liberation Sans", sans-serif;
`;

const NavBar = styled.div`
  position: absolute;
  right: 2px;
  top: 187px;
  width: 36px;
  height: 215px;
  padding: 1px 2px;
  display: flex;
  flex-direction: column;
  align-items: center;
  background: #9e9e9e;
  border: 2px solid #6a6a6a;
  border-radius: 5px;
`;

const NavButton = styled.button`
  width: 28px;
  height: ${(p) => p.$h}px;
  display: flex;
  flex-direction: column;
  align-items: center;
  justify-content: ${(p) => (p.$line ? "flex-end" : "center")};
  padding-bottom: ${(p) => (p.$line ? 4 : 0)}px;
  border-bottom: ${(p) => (p.$line ? "1px solid #909090" : "0")};
  gap: 4px;
  ${(p) =>
    p.$corner &&
    css`
      width: 10px;
      align-self: flex-end;
    `}
`;

const N = "#868686";

const VScroll = styled.div`
  flex: none;
  width: 17px;
  display: flex;
  flex-direction: column;
  align-items: center;
  justify-content: space-between;
  padding: 7px 0 24px;
  background: #f0f0f0;
  border-left: 1px solid #fff;
`;

const HScroll = styled.div`
  height: 17px;
  display: flex;
  align-items: center;
  justify-content: space-between;
  padding: 0 6px;
  background: #ededed;
  border-top: 1px solid #fff;
`;

const Thumb = styled.i`
  width: 15px;
  height: 15px;
  background: linear-gradient(90deg, #f8f8f8, #cfcfcf);
  border: 1px solid #999;
  border-radius: 2px;
`;

const WindowEdge = styled.div`
  flex: none;
  width: 8px;
  background: linear-gradient(#b4d0f0, #d4e4f6 90px, #b8d0ea 91px);
  border-right: 1px solid #111;
  box-shadow: inset -1px 0 0 #1cc4ef;
`;

const CommandLine = styled.form`
  position: absolute;
  left: 279px;
  right: 254px;
  bottom: 1px;
  height: 25px;
  display: flex;
`;

const CommandGrip = styled.div`
  flex: none;
  width: 53px;
  display: flex;
  align-items: center;
  padding-left: 2px;
  gap: 6px;
  background: linear-gradient(#8a8a8a, #6c6c6c);
  border: 1px solid #777;
`;

const CommandField = styled.label`
  flex: 1;
  display: flex;
  align-items: center;
  gap: 4px;
  padding: 0 3px 0 5px;
  background: rgba(255, 255, 255, 0.75);
  border: 1px solid #a0a0a0;
  border-left: 0;
  border-radius: 0 3px 3px 0;
  input {
    flex: 1;
    padding: 0 0 0 3px;
    border: 0;
    outline: 0;
    background: transparent;
    color: #333;
    font: italic 12px/16px "DejaVu Sans Mono", monospace;
    &::placeholder { color: #9a9a9a; opacity: 1; }
  }
`;

function View() {
  return (
    <Workspace2D>
      <ViewColumn>
        <Canvas>
          <Plot viewBox="0 173 1341 509" shapeRendering="crispEdges" aria-label="Drawing">
            <path d="M316.500 176.500H1026.500V678.500H316.500zM670.500 176V678" fill="none" stroke="#c4622d" />
            {sheets.map((s) => <Sheet key={s.dx} data={s} />)}
          </Plot>
          <ViewLabel>[−][Top][2D Wireframe]</ViewLabel>
          <ViewControls>
            <button aria-label="Minimize view"><Svg w={13} h={13}><path d="M.5 7.500h12v4H.5z" fill="#fff" stroke="#333" /></Svg></button>
            <button aria-label="Restore view"><Svg w={13} h={13}><path d="M3.500.5h9v9h-9z" fill="#fff" stroke="#333" /><path d="M.5 3.500h9v9h-9z" fill="#fff" stroke="#333" /><path d="M3.500 6.500h3v3h-3z" fill="#848484" stroke="#333" /></Svg></button>
            <button aria-label="Close view"><Svg w={13} h={13}><path d="m2 2 9 9M11 2l-9 9" stroke="#333" strokeWidth="4.600" /><path d="m2 2 9 9M11 2l-9 9" stroke="#fff" strokeWidth="2.600" /></Svg></button>
          </ViewControls>
          <Compass>
            <Svg w={94} h={102}>
              <circle cx="47" cy="50" r="38.500" stroke="#979797" strokeWidth="9" />
              <path d="M29 32h36v36H29z" fill="#cecece" /><path d="M36 39h22v22H36z" fill="#bdbfc7" />
              <g fill="#c8c8c8" fontFamily="Liberation Sans, sans-serif" fontSize="14" fontWeight="700" textAnchor="middle" stroke="#757575" strokeWidth="1" paintOrder="stroke">
                <text x="47" y="16">N</text><text x="7" y="56">W</text><text x="87" y="56">E</text><text x="47" y="96">S</text>
              </g>
              <text x="47" y="53" textAnchor="middle" fontFamily="Noto Sans, sans-serif" fontSize="8" fontWeight="700" fill="#5a5c62">TOP</text>
            </Svg>
          </Compass>
          <Wcs>WCS<Svg w={9} h={6}><path d="M1 1h7L4.500 5z" stroke="#8d8d95" /></Svg></Wcs>
          <NavBar>
            <NavButton $h={8} $corner aria-label="Close navigation bar"><Svg w={9} h={9}><circle cx="4.500" cy="4.500" r="4" fill="#8a8a8a" /><path d="m3 3 3 3M6 3 3 6" stroke="#aaa" /></Svg></NavButton>
            <NavButton $h={45} $line aria-label="Steering wheel">
              <Svg w={24} h={24}><path d="M12 1.500h8a2 2 0 0 1 2 2V12A10.500 10.500 0 1 1 12 1.500z" stroke={N} /><circle cx="12" cy="12" r="5.500" stroke={N} /><path d="m8 16-3 3M16 16l3 3" stroke={N} /></Svg>
              <Caret w={6} color={N} />
            </NavButton>
            <NavButton $h={31} aria-label="Pan">
              <Svg w={24} h={24}><path d="M8 22C7 19 2 15 1 12c1-1.500 3-1 5 1.500L4 5c0-2 2-2 2.500-.5L9 11 8.500 3c0-2 2.500-2 3 0L12 10l1.500-7c.5-2 2.500-1.500 2.500 0L15.500 11 19 5c1-2 3-1 2.500 1L19 14c0 4-1 6-2 8z" stroke={N} strokeLinejoin="round" /></Svg>
            </NavButton>
            <NavButton $h={36} aria-label="Zoom extents">
              <Svg w={24} h={24}><path d="m2 2 12 12M16 2 2 15M2 7V2h5M11 2h5v5M2 11v5h5" stroke={N} strokeWidth="1.500" /><circle cx="16" cy="15" r="4.500" fill="#a2a2a2" stroke={N} strokeWidth="1.400" /><path d="m19 19 4 4" stroke={N} strokeWidth="3" /></Svg>
              <Caret w={6} color={N} />
            </NavButton>
            <NavButton $h={43} $line aria-label="Orbit">
              <Svg w={24} h={24}><ellipse cx="12" cy="14" rx="11" ry="4.500" stroke={N} strokeWidth="1.300" /><path d="M10 21V6H8l4-5 4 5h-2v15z" fill="#a6a6a6" stroke={N} /><path d="m3 17 5-3v6z" fill={N} /></Svg>
              <Caret w={6} color={N} />
            </NavButton>
            <NavButton $h={32} aria-label="ShowMotion">
              <Svg w={24} h={24}><path d="M.5 1.500h6v6h-6zM8.500 1.500h6v6h-6zM16.500 1.500h6v6h-6zM.5 10.500h16v13H.5z" stroke={N} /><path d="m6 13 6 4-6 4z" fill={N} /></Svg>
            </NavButton>
            <NavButton $h={14} $corner aria-label="Navigation bar options"><Svg w={9} h={9}><circle cx="4.500" cy="4.500" r="3.500" stroke={N} /><path d="M2.500 4.500h4" stroke={N} /></Svg></NavButton>
          </NavBar>
        </Canvas>
        <HScroll>
          <Svg w={4} h={6}><path d="M4 0v6L0 3z" fill="#222" /></Svg>
          <Thumb />
          <Svg w={4} h={6}><path d="M0 0v6l4-3z" fill="#222" /></Svg>
        </HScroll>
        <CommandLine onSubmit={(e) => e.preventDefault()}>
          <CommandGrip>
            <Svg w={6} h={16}><path d="M1.500 0v16M4.500 0v16" stroke="#ccc" strokeWidth="2" strokeDasharray="2 1" /></Svg>
            <Svg w={10} h={10}><path d="m1 1 8 8M9 1 1 9" stroke="#fff" strokeWidth="2" /></Svg>
            <Svg w={20} h={15}><path d="m9 6 7 7" stroke="#333" strokeWidth="4.500" strokeLinecap="round" /><path d="m8 5 8 8" stroke="#eee" strokeWidth="3" strokeLinecap="round" /><path d="M8 1.500A3.500 3.500 0 1 1 4.500 5" stroke="#eee" strokeWidth="2" /></Svg>
          </CommandGrip>
          <CommandField>
            <Svg w={15} h={13}><rect x=".5" y=".5" width="14" height="12" fill="#dde2ea" stroke="#808894" /><path d="m3 3 3 3-3 3M7 10h5" stroke="#444c58" /></Svg>
            <Caret w={6} color="#888" />
            <input placeholder="Type a command" aria-label="Command line" />
            <Svg w={8} h={4}><path d="M0 4 4 0l4 4z" fill="#555" /></Svg>
          </CommandField>
        </CommandLine>
      </ViewColumn>
      <VScroll>
        <Svg w={7} h={4}><path d="M0 4 3.500 0 7 4z" fill="#333" /></Svg>
        <Thumb />
        <Svg w={7} h={4}><path d="M0 0h7L3.500 4z" fill="#333" /></Svg>
      </VScroll>
      <WindowEdge />
    </Workspace2D>
  );
}

/* ---------- bottom bar ---------- */

const Bottom = styled.footer`
  display: flex;
  justify-content: space-between;
  height: 29px;
  background: #383838;
`;

const LayoutTabs = styled.nav`
  display: flex;
  align-items: flex-start;
  padding-left: 11px;
`;

const LayoutTab = styled.a`
  width: ${(p) => p.$w}px;
  height: 18px;
  margin-right: -1px;
  text-align: center;
  line-height: 18px;
  text-decoration: none;
  font-weight: ${(p) => (p.$on ? 700 : 400)};
  color: ${(p) => (p.$on ? "#fff" : "#aaa")};
  background: ${(p) => (p.$on ? "linear-gradient(#5a5a5a, #858585)" : "#515151")};
  clip-path: polygon(0 0, 100% 0, calc(100% - 4px) 30%, calc(100% - 8px) 90%, calc(100% - 11px) 100%, 11px 100%, 8px 90%, 4px 30%);
`;

const Status = styled.div`
  display: flex;
  gap: 1px;
  padding-top: 1px;
`;

const StatusGroup = styled.div`
  display: flex;
  align-items: center;
  height: 26px;
  width: ${(p) => p.$w}px;
  padding: 0 ${(p) => p.$pad || 4}px;
  justify-content: space-between;
  background: #4d4d4d;
  border: 1px solid #7c7c7c;
  color: #fff;
  button { display: flex; align-items: center; gap: 2px; white-space: nowrap; }
`;

const G = "#c4c4c4";
const Blue = "#2a97ff";
const annoPath = "M8 0l2 8 6 6-6-2-2 4-2-4-6 2 6-6z";

const StatusArrow = () => <button aria-label="More"><Caret w={7} h={5} /></button>;

function BottomBar() {
  return (
    <Bottom>
      <LayoutTabs>
        <LayoutTab href="#model" $w={59} $on>Model</LayoutTab>
        <LayoutTab href="#layout1" $w={67}>Layout1</LayoutTab>
        <AddTab $bottom aria-label="New layout"><Plus /></AddTab>
      </LayoutTabs>
      <Status>
        <StatusGroup $w={48} $pad={2}><button>MODEL</button></StatusGroup>
        <StatusGroup $w={66}>
          <button aria-label="Grid"><Svg><path d="M2.500 1v14M5.500 1v14M8.500 1v14M11.500 1v14M14.500 1v14" stroke={G} strokeDasharray="3 1" /></Svg></button>
          <button aria-label="Snap"><Svg><path d="M1.500 1v15M4.500 1v15M7.500 1v15M10.500 1v15M13.500 1v15" stroke={G} strokeDasharray="1 2" /></Svg></button>
          <StatusArrow />
        </StatusGroup>
        <StatusGroup $w={101}>
          <button aria-label="Ortho"><Svg><path d="M3 1v13h12M3 9h5v5" stroke={Blue} strokeWidth="1.800" /></Svg></button>
          <button aria-label="Polar"><Svg><circle cx="7" cy="8" r="6" stroke={G} strokeWidth="1.500" /><path d="M15 8H7l6-6M10 3v5" stroke={G} /></Svg></button>
          <StatusArrow />
          <button aria-label="Isometric"><Svg w={18} h={20}><path d="m1 1 15 16M9 0v6M9 12v8M10 9l6-6" stroke={G} strokeWidth="1.300" /></Svg></button>
          <StatusArrow />
        </StatusGroup>
        <StatusGroup $w={66}>
          <button aria-label="Object snap tracking"><Svg><path d="M1 14h14M1 14 13 2" stroke={Blue} strokeWidth="1.800" /></Svg></button>
          <button aria-label="Object snap"><Svg><path d="M3 3h11v11H3z" stroke={Blue} strokeWidth="1.800" /><path d="M.5.5h5v5h-5z" fill="#2fd22f" stroke="#052" /></Svg></button>
          <StatusArrow />
        </StatusGroup>
        <StatusGroup $w={110}>
          <button aria-label="Annotation visibility"><Svg><path d={annoPath} fill={Blue} /><circle cx="10" cy="4" r="3" fill="#1668c4" stroke={Blue} strokeWidth="1.500" /></Svg></button>
          <button aria-label="Auto scale"><Svg><path d={annoPath} fill={G} /><path d="m13 0-4 5h2l-2 4 5-5h-2z" fill="#eee" stroke="#4d4d4d" strokeWidth=".5" /></Svg></button>
          <button aria-label="Annotation scale"><Svg><path d={annoPath} fill={G} /></Svg></button>
          <button>1:1 <Caret w={7} h={5} /></button>
        </StatusGroup>
        <StatusGroup $w={41}>
          <button aria-label="Workspace switching"><Gear size={15} color={G} /></button>
          <StatusArrow />
        </StatusGroup>
        <StatusGroup $w={26}><button aria-label="Annotation monitor"><Svg><path d="M8 1v14M1 8h14" stroke={G} strokeWidth="2" /></Svg></button></StatusGroup>
        <StatusGroup $w={26}><button aria-label="Isolate objects"><Svg><path d="M1.500 1.500h5v5h-5zM3 15h7l-3.500-5z" stroke={G} strokeWidth="1.300" /><circle cx="12" cy="7" r="3" stroke={G} strokeWidth="1.300" /></Svg></button></StatusGroup>
        <StatusGroup $w={26}><button aria-label="Hardware acceleration"><Svg><circle cx="8" cy="8" r="7.500" fill="#0a5fb8" stroke={Blue} /><path d="m7 11 5-5" stroke="#7cc0ff" strokeWidth="1.500" /></Svg></button></StatusGroup>
        <StatusGroup $w={70}>
          <button aria-label="Lock UI"><Svg><path d="M1.500 1.500h12v11h-12z" fill="#ddd" stroke="#fff" /><path d="M4 4h6v6H4z" stroke="#333" /><path d="M6 6h2v2H6z" fill="#333" /><path d="M9 9h6v6H9z" fill="#f4c430" stroke="#222" strokeWidth=".5" /><path d="M10.500 9V7.500h3V9" stroke="#fff" /></Svg></button>
          <button aria-label="Graphics performance"><Svg w={19} h={17}><path d="M.5.5h17v15H.5z" fill="#fff" stroke="#222" /><path d="M1 13C5 12 5 3 9 3s4 9 8 10" stroke="#222" strokeWidth="1.300" /><path d="m15 8 4 8h-8z" fill="#e25a1c" /></Svg></button>
          <button aria-label="File status"><Svg><path d="M1 1h8l4 4v9H1z" fill="#3d79b8" /><path d="M1 8h12v6H1z" fill="#f4c430" /><path d="M3 4h5M5 2v5" stroke="#fff" strokeWidth="1.500" /><path d="m7 11 3 3 6-6" stroke="#2fd22f" strokeWidth="2.400" /></Svg></button>
        </StatusGroup>
        <StatusGroup $w={51}>
          <button aria-label="Clean screen"><Svg><path d="M.5 2.500h15v12H.5z" stroke={G} strokeWidth="1.400" /><path d="m8 8 4-3M9 5h3v3M8 9l-4 3M4 9v3h3" stroke={G} strokeWidth="1.300" /></Svg></button>
          <button aria-label="Customization"><Svg><path d="M1 3h15M1 8h15M1 13h15" stroke={G} strokeWidth="2" /></Svg></button>
        </StatusGroup>
      </Status>
    </Bottom>
  );
}

const Window = styled.div`
  display: flex;
  flex-direction: column;
  min-height: 100vh;
`;

export default function App() {
  return (
    <Window>
      <GlobalStyle />
      <TopBar />
      <RibbonBar />
      <FileTabs>
        <FileTab $w={128}><a href="#start">Start</a></FileTab>
        <FileTab $w={162} $on>
          <a href="#drawing">SPTSIS-V0.0-Trabalho*</a>
          <button aria-label="Close drawing"><Svg w={8} h={8}><path d="m1 1 6 6M7 1 1 7" stroke="#444" strokeWidth="1.600" /></Svg></button>
        </FileTab>
        <AddTab aria-label="New drawing"><Plus /></AddTab>
      </FileTabs>
      <View />
      <BottomBar />
    </Window>
  );
}
